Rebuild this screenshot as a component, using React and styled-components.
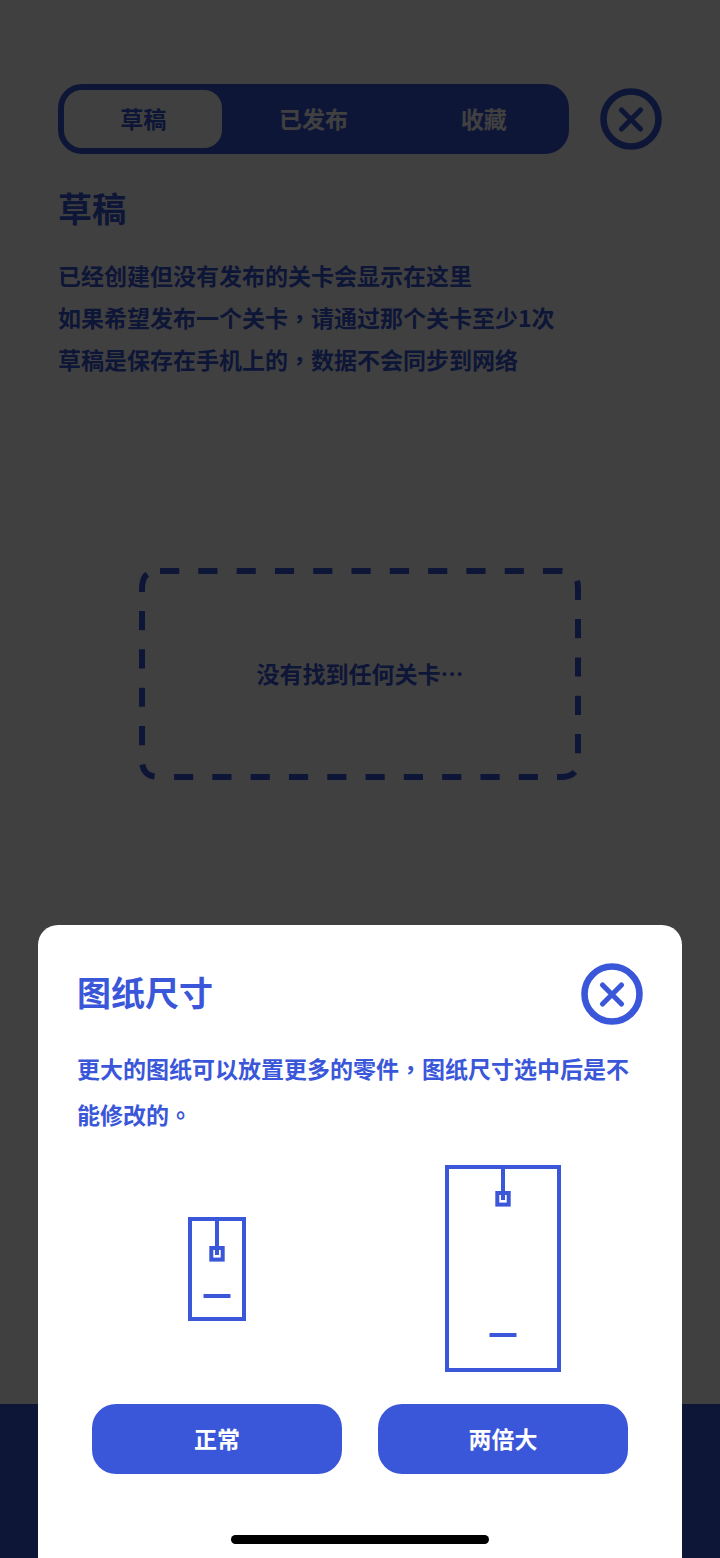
import React, { useState } from "react";
import styled, { createGlobalStyle } from "styled-components";

const BLUE = "#3b57d9";

const tabs = ["草稿", "已发布", "收藏"];

const sizes = [
    { label: "正常", width: 58, height: 104, hookTop: 29, floor: 79 },
    { label: "两倍大", width: 116, height: 207, hookTop: 26, floor: 170 },
];

const CloseIcon = () => (
    <svg viewBox="0 0 62 62" fill="none" stroke="currentColor" aria-hidden="true">
        <circle cx="31" cy="31" r="27.5" strokeWidth="6.6" />
        <path d="M21.5 22 L40.5 41 M40.5 22 L21.5 41" strokeWidth="5.2" strokeLinecap="round" />
    </svg>
);

const Blueprint = ({ width, height, hookTop, floor }) => {
    const mid = width / 2;
    return (
        <svg
            width={width}
            height={height}
            viewBox={`0 0 ${width} ${height}`}
            fill="none"
            stroke="currentColor"
            strokeWidth="4"
            aria-hidden="true"
        >
            <rect x="2" y="2" width={width - 4} height={height - 4} />
            <path d={`M${mid} 2V${hookTop + 9}`} />
            <rect x={mid - 5.7} y={hookTop + 2} width="11.4" height="11.6" />
            <path d={`M${mid - 13.5} ${floor}h27`} />
        </svg>
    );
};

const DashedFrame = () => (
    <Frame viewBox="0 0 442 212" preserveAspectRatio="none" aria-hidden="true">
        <path
            d="M21 3H421C434 3 439 8 439 21V191C439 204 434 209 421 209H21C8 209 3 204 3 191V21C3 8 8 3 21 3Z"
            strokeDasharray="19.2 19.1"
        />
    </Frame>
);

const App = () => {
    const [activeTab, setActiveTab] = useState("草稿");
    const [sheetOpen, setSheetOpen] = useState(true);

    return (
        <>
            <GlobalStyle />
            <Page>
                <TopBar>
                    <Tabs role="tablist">
                        {tabs.map((tab) => (
                            <Tab
                                key={tab}
                                role="tab"
                                aria-selected={activeTab === tab}
                                $active={activeTab === tab}
                                onClick={() => setActiveTab(tab)}
                            >
                                {tab}
                            </Tab>
                        ))}
                    </Tabs>
                    <CloseButton aria-label="关闭">
                        <CloseIcon />
                    </CloseButton>
                </TopBar>

                <Intro>
                    <Title as="h1">{activeTab}</Title>
                    <p>已经创建但没有发布的关卡会显示在这里</p>
                    <p>
                        如果希望发布一个关卡<Mark>，</Mark>请通过那个关卡至少1次
                    </p>
                    <p>
                        草稿是保存在手机上的<Mark>，</Mark>数据不会同步到网络
                    </p>
                </Intro>

                <Empty>
                    <DashedFrame />
                    没有找到任何关卡<Mark>…</Mark>
                </Empty>

                <BottomBar />
            </Page>

            {sheetOpen && (
                <Overlay>
                    <Sheet role="dialog" aria-modal="true" aria-labelledby="sheet-title">
                        <SheetHeader>
                            <Title id="sheet-title">图纸尺寸</Title>
                            <CloseButton aria-label="关闭" onClick={() => setSheetOpen(false)}>
                                <CloseIcon />
                            </CloseButton>
                        </SheetHeader>
                        <Description>
                            更大的图纸可以放置更多的零件<Mark>，</Mark>图纸尺寸选中后是不能修改的
                            <Mark>。</Mark>
                        </Description>
                        <Options>
                            {sizes.map(({ label, ...size }) => (
                                <Option key={label}>
                                    <Blueprint {...size} />
                                    <PickButton>{label}</PickButton>
                                </Option>
                            ))}
                        </Options>
                        <HomeIndicator />
                    </Sheet>
                </Overlay>
            )}
        </>
    );
};

const GlobalStyle = createGlobalStyle`
    * {
        box-sizing: border-box;
    }

    body {
        margin: 0;
        background: #ffffff;
        color: ${BLUE};
        font-family: "Noto Sans CJK SC", sans-serif;
        font-size: 23px;
        font-weight: 700;
    }

    h1, h2, p {
        margin: 0;
    }

    button {
        padding: 0;
        border: none;
        background: none;
        color: inherit;
        font: inherit;
        cursor: pointer;
    }
`;

const Page = styled.main`
    display: flex;
    flex-direction: column;
    min-height: 100vh;
`;

const TopBar = styled.div`
    display: flex;
    align-items: center;
    gap: 31px;
    padding: 84px 58px 0;
`;

const Tabs = styled.div`
    flex: 1;
    display: flex;
    height: 70px;
    border-radius: 24px;
    background: ${BLUE};
`;

const Tab = styled.button`
    flex: 1;
    margin: 6px;
    border-radius: 18px;

    && {
        padding-bottom: 2px;
        background: ${({ $active }) => ($active ? "#ffffff" : "transparent")};
        color: ${({ $active }) => ($active ? BLUE : "#ffffff")};
    }
`;

const CloseButton = styled.button`
    flex: none;
    width: 62px;
    height: 62px;
    border-radius: 50%;

    svg {
        display: block;
    }
`;

const Title = styled.h2`
    padding-bottom: 4px;
    font-size: 34px;
    line-height: 44px;
`;

const Intro = styled.section`
    padding: 32px 58px 0;
    line-height: 42px;

    h1 {
        margin-bottom: 20px;
    }
`;

/* punctuation sits in the middle of its em box */
const Mark = styled.span`
    font-family: "Noto Sans CJK TC", sans-serif;
`;

const Empty = styled.div`
    position: relative;
    display: flex;
    align-items: center;
    justify-content: center;
    height: 212px;
    margin: 188px 139px 0;
    padding-bottom: 2px;
`;

const Frame = styled.svg`
    position: absolute;
    inset: 0;
    width: 100%;
    height: 100%;
    fill: none;
    stroke: ${BLUE};
    stroke-width: 6px;
`;

const BottomBar = styled.footer`
    height: 154px;
    margin-top: auto;
    background: ${BLUE};
`;

const Overlay = styled.div`
    position: fixed;
    inset: 0;
    display: flex;
    align-items: flex-end;
    padding: 0 38px;
    background: rgba(0, 0, 0, 0.75);
`;

const Sheet = styled.section`
    flex: 1;
    padding: 38px 39px 14px;
    border-radius: 20px 20px 0 0;
    background: #ffffff;
`;

const SheetHeader = styled.header`
    display: flex;
    align-items: center;
    justify-content: space-between;
`;

const Description = styled.p`
    margin-top: 20px;
    line-height: 46px;
`;

const Options = styled.div`
    display: grid;
    grid-template-columns: 1fr 1fr;
    gap: 36px;
    margin-top: 28px;
    padding: 0 15px;
`;

const Option = styled.div`
    display: flex;
    flex-direction: column;
    align-items: center;
    gap: 32px;

    svg {
        margin: auto;
    }
`;

const PickButton = styled.button`
    width: 100%;
    height: 70px;
    border-radius: 24px;

    && {
        padding-bottom: 2px;
        background: ${BLUE};
        color: #ffffff;
    }
`;

const HomeIndicator = styled.div`
    width: 258px;
    height: 9px;
    margin: 61px auto 0;
    border-radius: 5px;
    background: #000000;
`;

export default App;
